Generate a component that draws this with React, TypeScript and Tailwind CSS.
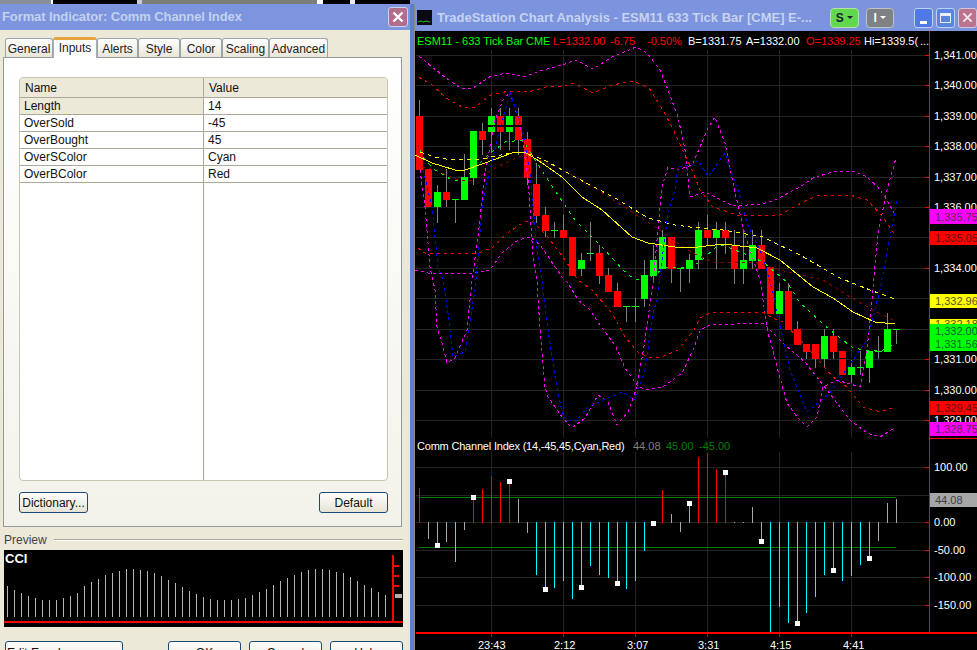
import React from "react";

type Pt = [number, number];

// candle: bar index, body top, body bottom, wick top, wick bottom, colour (g/r)
const candles: [number, number, number, number, number, string][] = [
  [0, 116, 170, 100, 170, "r"],
  [1, 169, 207, 169, 207, "r"],
  [2, 192, 207, 185, 223, "g"],
  [3, 192, 200, 169, 207, "r"],
  [4, 199, 199, 199, 223, "g"],
  [5, 177, 200, 154, 200, "g"],
  [6, 131, 178, 131, 185, "g"],
  [7, 131, 140, 123, 155, "r"],
  [8, 116, 132, 108, 153, "g"],
  [9, 116, 132, 108, 150, "r"],
  [10, 116, 132, 108, 150, "g"],
  [11, 116, 140, 108, 155, "r"],
  [12, 139, 178, 132, 185, "r"],
  [13, 184, 216, 163, 223, "r"],
  [14, 215, 231, 207, 237, "r"],
  [15, 230, 230, 222, 238, "g"],
  [16, 230, 238, 215, 238, "r"],
  [17, 237, 276, 237, 276, "r"],
  [18, 260, 269, 253, 276, "g"],
  [19, 253, 253, 222, 261, "g"],
  [20, 253, 276, 245, 284, "r"],
  [21, 275, 292, 268, 292, "r"],
  [22, 291, 307, 283, 307, "r"],
  [23, 306, 306, 306, 322, "g"],
  [24, 306, 306, 298, 322, "g"],
  [25, 275, 299, 260, 307, "g"],
  [26, 260, 276, 245, 283, "g"],
  [27, 237, 269, 230, 269, "g"],
  [28, 237, 269, 237, 283, "r"],
  [29, 268, 268, 268, 292, "g"],
  [30, 260, 269, 254, 283, "g"],
  [31, 230, 260, 222, 269, "g"],
  [32, 230, 238, 215, 245, "r"],
  [33, 230, 238, 222, 269, "g"],
  [34, 230, 238, 222, 254, "r"],
  [35, 245, 269, 230, 284, "r"],
  [36, 260, 269, 230, 284, "g"],
  [37, 245, 261, 230, 269, "g"],
  [38, 245, 269, 230, 269, "r"],
  [39, 267, 314, 267, 314, "r"],
  [40, 291, 314, 283, 314, "g"],
  [41, 291, 330, 283, 330, "r"],
  [42, 329, 345, 321, 345, "r"],
  [43, 344, 352, 344, 359, "r"],
  [44, 344, 359, 344, 368, "r"],
  [45, 336, 359, 329, 368, "g"],
  [46, 336, 352, 329, 359, "r"],
  [47, 351, 375, 351, 375, "r"],
  [48, 367, 375, 360, 383, "g"],
  [49, 367, 367, 351, 375, "g"],
  [50, 351, 368, 351, 383, "g"],
  [51, 351, 351, 336, 359, "g"],
  [52, 329, 352, 313, 352, "g"],
  [53, 329, 329, 329, 344, "g"],
];

// cci: bar index, end of the stem in screen y, colour
const cci: [number, number, string][] = [
  [0, 488, "r"], [1, 538, "a"], [2, 545, "a"], [3, 541, "a"], [4, 561, "c"], [5, 529, "a"],
  [6, 497, "r"], [7, 489, "r"], [8, 476, "r"], [9, 482, "r"], [10, 481, "r"], [11, 499, "a"],
  [12, 532, "a"], [13, 574, "c"], [14, 589, "c"], [15, 587, "c"], [16, 580, "c"], [17, 598, "c"],
  [18, 587, "c"], [19, 565, "c"], [20, 574, "c"], [21, 577, "c"], [22, 583, "c"], [23, 588, "c"],
  [24, 580, "c"], [25, 550, "c"], [26, 523, "a"], [27, 490, "r"], [28, 514, "a"], [29, 531, "a"],
  [30, 503, "a"], [31, 457, "r"], [32, 453, "r"], [33, 469, "r"], [34, 472, "r"], [35, 522, "a"],
  [36, 522, "a"], [37, 507, "a"], [38, 541, "a"], [39, 631, "c"], [40, 606, "c"], [41, 622, "c"],
  [42, 623, "c"], [43, 612, "c"], [44, 596, "c"], [45, 574, "c"], [46, 570, "c"], [47, 580, "c"],
  [48, 575, "c"], [49, 564, "c"], [50, 558, "c"], [51, 540, "a"], [52, 503, "a"], [53, 499, "a"],
];

const bands: { color: string; dash: string; pts: Pt[] }[] = [
  { color: "#ff00ff", dash: "3 3", pts: [[419, 56], [432, 67], [446, 78], [462, 89], [473, 88], [491, 76], [508, 73], [524, 77], [540, 71], [562, 65], [576, 60], [593, 69], [612, 57], [636, 47], [647, 53], [660, 70], [668, 90], [678, 117], [685, 150], [690, 197], [705, 192], [733, 206], [762, 204], [775, 200], [800, 187], [813, 178], [832, 172], [853, 171], [867, 177], [878, 187], [887, 200], [895, 215]] },
  { color: "#ff00ff", dash: "3 3", pts: [[415, 270], [428, 273], [472, 273], [490, 270], [502, 253], [518, 240], [530, 237], [540, 245], [562, 277], [568, 283], [578, 300], [590, 310], [602, 328], [615, 345], [625, 368], [637, 385], [645, 390], [663, 387], [682, 373], [694, 348], [700, 330], [710, 325], [763, 323], [770, 330], [785, 345], [805, 362], [827, 390], [837, 403], [850, 420], [867, 433], [880, 437], [893, 429]] },
  { color: "#ff00ff", dash: "3 3", pts: [[420, 170], [425, 207], [430, 267], [435, 290], [437, 327], [442, 343], [447, 363], [455, 358], [467, 330], [472, 280], [478, 237], [485, 173], [495, 120], [503, 100], [510, 92], [520, 125], [528, 177], [533, 257], [537, 280], [540, 330], [545, 387], [548, 397], [562, 417], [572, 428], [585, 418], [598, 395], [608, 402], [617, 425], [628, 412], [637, 387], [645, 340], [653, 283], [662, 187], [668, 167], [677, 170], [692, 165], [700, 147], [707, 130], [715, 117], [725, 143], [735, 193], [745, 235], [760, 280], [768, 333], [772, 347], [777, 367], [787, 403], [797, 417], [807, 427], [817, 417], [823, 387], [837, 380], [860, 387], [867, 350], [872, 300], [878, 233], [887, 190], [896, 158]] },
  { color: "#ff0000", dash: "3 4", pts: [[419, 77], [432, 85], [446, 98], [464, 108], [475, 107], [491, 95], [509, 91], [529, 92], [549, 86], [564, 86], [573, 83], [593, 93], [612, 85], [634, 81], [649, 88], [663, 110], [672, 127], [692, 170], [700, 190], [713, 207], [737, 215], [780, 215], [803, 202], [817, 196], [850, 195], [867, 200], [883, 217], [895, 235]] },
  { color: "#ff0000", dash: "3 4", pts: [[418, 248], [425, 253], [448, 253], [475, 254], [492, 248], [505, 235], [525, 221], [533, 222], [548, 237], [565, 260], [578, 280], [592, 290], [612, 313], [625, 337], [638, 352], [648, 357], [662, 357], [678, 350], [694, 330], [700, 318], [710, 313], [763, 312], [772, 318], [783, 322], [805, 345], [833, 377], [847, 387], [863, 407], [880, 412], [895, 407]] },
  { color: "#8b0000", dash: "3 4", pts: [[422, 167], [435, 170], [458, 180], [473, 180], [495, 168], [523, 155], [558, 167], [598, 190], [632, 212], [667, 235], [680, 245], [697, 255], [713, 262], [757, 263], [780, 270], [823, 280], [850, 297], [873, 310], [893, 320]] },
  { color: "#00ff00", dash: "3 5", pts: [[420, 150], [425, 160], [435, 170], [452, 180], [463, 180], [488, 155], [505, 142], [523, 140], [535, 160], [558, 195], [575, 220], [602, 247], [623, 270], [635, 280], [650, 277], [667, 267], [687, 268], [700, 262], [715, 248], [723, 245], [740, 252], [763, 262], [787, 282], [800, 303], [830, 330], [853, 348], [870, 351], [883, 350], [897, 342]] },
  { color: "#ffff00", dash: "", pts: [[415, 155], [432, 163], [455, 170], [465, 170], [485, 163], [512, 153], [525, 152], [542, 163], [562, 177], [582, 197], [602, 210], [632, 237], [648, 243], [675, 247], [690, 248], [723, 244], [757, 248], [780, 260], [813, 287], [833, 298], [853, 312], [875, 322], [895, 324]] },
  { color: "#ffff00", dash: "4 4", pts: [[420, 152], [435, 157], [452, 160], [482, 159], [515, 152], [525, 152], [548, 162], [575, 177], [615, 198], [648, 218], [675, 225], [690, 227], [723, 230], [763, 237], [800, 255], [840, 278], [870, 290], [895, 299]] },
  { color: "#0000ff", dash: "3 3", pts: [[423, 170], [432, 207], [438, 267], [443, 280], [448, 313], [453, 357], [465, 352], [475, 290], [483, 200], [497, 140], [510, 92], [518, 117], [525, 140], [530, 173], [537, 250], [542, 280], [547, 323], [555, 377], [563, 417], [575, 422], [588, 407], [603, 400], [622, 392], [635, 400], [645, 370], [653, 313], [657, 300], [668, 213], [675, 190], [678, 167], [692, 165], [698, 160], [708, 177], [725, 153], [728, 163], [738, 190], [747, 223], [763, 257], [773, 293], [790, 370], [807, 412], [830, 393], [867, 340], [880, 290], [897, 200]] },
];

const priceTicks: [string, number][] = [
  ["1,341.00", 55], ["1,340.00", 85], ["1,339.00", 116], ["1,338.00", 146], ["1,337.00", 177],
  ["1,336.00", 207], ["1,334.00", 268], ["1,331.00", 359], ["1,330.00", 390], ["1,329.00", 420],
];

const priceFlags: { label: string; y: number; h: number; bg: string; fg: string; ty: number }[] = [
  { label: "1,335.75", y: 209, h: 15, bg: "#ff00ff", fg: "#5a2a5a", ty: 217 },
  { label: "1,335.05", y: 231, h: 14, bg: "#ff0000", fg: "#5a1414", ty: 238 },
  { label: "1,332.96", y: 294, h: 14, bg: "#ffff00", fg: "#555522", ty: 301 },
  { label: "1,332.18", y: 319, h: 6, bg: "#ffff00", fg: "#555522", ty: 324 },
  { label: "1,332.00", y: 324, h: 14, bg: "#00ff00", fg: "#063", ty: 331 },
  { label: "1,331.56", y: 338, h: 13, bg: "#00ff00", fg: "#063", ty: 344 },
  { label: "1,329.45", y: 401, h: 14, bg: "#ff0000", fg: "#5a1414", ty: 408 },
  { label: "1,328.75", y: 422, h: 14, bg: "#ff00ff", fg: "#5a2a5a", ty: 429 },
];

const subTicks: [string, number][] = [
  ["100.00", 467], ["0.00", 522], ["-50.00", 550], ["-100.00", 577], ["-150.00", 605],
];

const headerBits: [string, number, string][] = [
  ["ESM11 - 633 Tick Bar", 417, "#00ff00"], ["CME", 526, "#00ff00"], ["L=1332.00", 553, "#ff0000"],
  ["-6.75", 610, "#ff0000"], ["-0.50%", 647, "#ff0000"], ["B=1331.75", 688, "#ffffff"],
  ["A=1332.00", 746, "#ffffff"], ["O=1339.25", 806, "#ff0000"], ["Hi=1339.5(", 864, "#ffffff"], ["...", 920, "#ffffff"],
];

const timeLabels: [string, number, number][] = [
  ["23:43", 478, 491], ["2:12", 554, 563], ["3:07", 627, 635], ["3:31", 698, 707], ["4:15", 770, 779], ["4:41", 843, 851],
];

const previewTops = [348, 360, 369, 378, 384, 390, 390, 390, 384, 378, 369, 348, 336, 327, 315, 309, 303, 297, 297, 300, 303, 309, 318, 330, 339, 351, 363, 372, 381, 387, 390, 390, 390, 387, 384, 375, 366, 357, 345, 333, 324, 315, 306, 300, 297, 297, 300, 306, 309, 321, 333, 345, 354, 366, 375];

const tabs = [
  { label: "General", w: "w-[48px]" },
  { label: "Inputs", w: "w-[44px]", active: true },
  { label: "Alerts", w: "w-[41px]" },
  { label: "Style", w: "w-[42px]" },
  { label: "Color", w: "w-[42px]" },
  { label: "Scaling", w: "w-[47px]" },
  { label: "Advanced", w: "w-[59px]" },
];

const inputs = [
  ["Length", "14"],
  ["OverSold", "-45"],
  ["OverBought", "45"],
  ["OverSColor", "Cyan"],
  ["OverBColor", "Red"],
];

const barX = (i: number) => 419.5 + 9 * i;
const toPoints = (pts: Pt[]) => pts.map((p) => p.join(",")).join(" ");

function XpButton({ label, className }: { label: string; className: string }) {
  return (
    <div
      className={
        "flex items-center justify-center shrink-0 rounded-[3px] border border-[#1c4a78] bg-gradient-to-b from-white to-[#e6e3d4] text-[12px] text-[#111] " +
        className
      }
    >
      {label}
    </div>
  );
}

function FormatDialog() {
  return (
    <div className="w-[410px] h-full shrink-0 flex flex-col bg-[#ece9d8]">
      <div className="h-[26px] shrink-0 flex items-center justify-between pl-[2px] pr-[2px] bg-[#7c95de]">
        <span className="text-[13px] font-bold text-[#c3d1f1] tracking-[-0.1px]">Format Indicator: Comm Channel Index</span>
        <div className="w-[20px] h-[20px] rounded-[3px] border border-[#c9d4ee] bg-[#b26c8c] flex items-center justify-center">
          <svg width="12" height="12" viewBox="0 0 12 12">
            <path d="M1.5 1.5 L10.5 10.5 M10.5 1.5 L1.5 10.5" stroke="#ffffff" strokeWidth="2.4" />
          </svg>
        </div>
      </div>

      <div className="h-[21px] mt-[6px] shrink-0 flex items-end pl-[5px]">
        {tabs.map((t) =>
          t.active ? (
            <div
              key={t.label}
              className={
                t.w +
                " h-[21px] -mb-px z-10 flex items-start justify-center pt-[1px] rounded-t-[3px] border-t-[3px] border-x border-t-[#e8a33c] border-x-[#aab] bg-white text-[12px] text-[#222] leading-[14px]"
              }
            >
              {t.label}
            </div>
          ) : (
            <div
              key={t.label}
              className={
                t.w +
                " h-[19px] flex items-center justify-center pt-[1px] rounded-t-[3px] border border-b-0 border-[#9aa5a8] bg-gradient-to-b from-white to-[#e9e6d8] text-[12px] text-[#222]"
              }
            >
              {t.label}
            </div>
          ),
        )}
      </div>

      <div className="ml-[3px] w-[399px] h-[470px] shrink-0 border border-[#919b9c] bg-gradient-to-b from-white to-[#f3f2ea] px-[15px] pt-[19px]">
        <div className="w-[369px] h-[404px] flex flex-col rounded-[4px] border border-[#c8c5b2] bg-white text-[12px] text-[#111] overflow-hidden">
          <div className="h-[20px] shrink-0 grid grid-cols-[184px_1fr] bg-[#ece9d8] border-b border-[#aca899]">
            <div className="pl-[5px] pt-[1px] leading-[19px] border-r border-[#aca899]">Name</div>
            <div className="pl-[5px] pt-[1px] leading-[19px]">Value</div>
          </div>
          {inputs.map(([name, value], i) => (
            <div key={name} className="h-[17px] shrink-0 grid grid-cols-[184px_1fr] border-b border-[#aca899]">
              <div className={"pl-[4px] leading-[16px] border-r border-[#aca899] " + (i === 0 ? "bg-[#ece9d8]" : "")}>{name}</div>
              <div className="pl-[4px] leading-[16px]">{value}</div>
            </div>
          ))}
          <div className="flex-1 grid grid-cols-[184px_1fr]">
            <div className="border-r border-[#aca899]" />
            <div />
          </div>
        </div>
        <div className="mt-[11px] w-[369px] flex justify-between">
          <XpButton label="Dictionary..." className="w-[69px] h-[21px]" />
          <XpButton label="Default" className="w-[69px] h-[21px]" />
        </div>
      </div>

      <div className="h-[23px] shrink-0 flex items-center pt-[2px] pl-[4px] pr-[7px] gap-[7px]">
        <span className="text-[12px] text-[#444]">Preview</span>
        <div className="flex-1 h-[2px] border-t border-[#aca899] bg-white" />
      </div>

      <div className="ml-[4px] w-[399px] h-[77px] shrink-0 bg-black">
        <svg width="399" height="77" viewBox="4 550 399 77" className="block">
          {previewTops.map((z, i) => (
            <rect key={i} x={7 + 7 * i} y={Math.round(470 + z / 3)} width="1" height={617 - Math.round(470 + z / 3)} fill="#b5b5b5" />
          ))}
          <text x="5" y="563" fill="#ffffff" fontSize="13" fontWeight="700" fontFamily="'Liberation Sans',Arial,sans-serif">CCI</text>
          <rect x="4" y="621" width="399" height="2" fill="#ff0000" />
          <rect x="392" y="555" width="2" height="67" fill="#ff0000" />
          <rect x="393" y="565" width="6" height="2" fill="#ff0000" />
          <rect x="393" y="575" width="6" height="2" fill="#ff0000" />
          <rect x="393" y="585" width="6" height="2" fill="#ff0000" />
          <rect x="395" y="594" width="7" height="4" fill="#b0b0b0" />
        </svg>
      </div>

      <div className="mt-[14px] h-[24px] shrink-0 flex pl-[5px]">
        <XpButton label="Edit EasyLanguage..." className="w-[118px] h-[24px]" />
        <XpButton label="OK" className="ml-[45px] w-[73px] h-[24px]" />
        <XpButton label="Cancel" className="ml-[8px] w-[73px] h-[24px]" />
        <XpButton label="Help" className="ml-[8px] w-[73px] h-[24px]" />
      </div>
    </div>
  );
}

function ChartTitleBar() {
  return (
    <div className="h-[27px] shrink-0 flex items-center pl-[2px] bg-[#7c94dd]">
      <svg width="15" height="15" viewBox="0 0 15 15" className="shrink-0">
        <rect width="15" height="15" fill="#0a0a14" />
        <path d="M1 12 L4 11 L6 12 L9 11 L13 12" stroke="#20c020" strokeWidth="1" fill="none" />
      </svg>
      <span className="ml-[5px] w-[393px] shrink-0 text-[13px] font-bold text-[#c6d3f1] whitespace-nowrap overflow-hidden">
        TradeStation Chart Analysis - ESM11 633 Tick Bar [CME] E-...
      </span>
      <div className="w-[29px] h-[20px] rounded-[4px] border border-[#b8e0a8] bg-[#62d84e] flex items-center justify-center gap-[3px] text-[12px] font-bold text-[#123]">
        S<span className="w-0 h-0 border-x-[3px] border-x-transparent border-t-[3px] border-t-[#123]" />
      </div>
      <div className="ml-[7px] w-[28px] h-[20px] rounded-[4px] border border-[#c0c4c8] bg-[#7e8284] flex items-center justify-center gap-[3px] text-[12px] font-bold text-white">
        I<span className="w-0 h-0 border-x-[3px] border-x-transparent border-t-[3px] border-t-white" />
      </div>
      <div className="ml-[20px] w-[20px] h-[20px] rounded-[3px] border border-[#c0d0f0] bg-[#4f79e4] flex items-end justify-center pb-[3px]">
        <div className="w-[7px] h-[3px] bg-white" />
      </div>
      <div className="ml-[3px] w-[19px] h-[20px] rounded-[3px] border border-[#c0d0f0] bg-[#5a84e2] flex items-center justify-center">
        <div className="w-[11px] h-[10px] border border-t-[3px] border-[#e6edfb]" />
      </div>
      <div className="ml-[3px] w-[19px] h-[20px] rounded-[3px] border border-[#d0c8e0] bg-[#bb7390] flex items-center justify-center">
        <svg width="11" height="11" viewBox="0 0 12 12">
          <path d="M1.5 1.5 L10.5 10.5 M10.5 1.5 L1.5 10.5" stroke="#f3e4ea" strokeWidth="2.2" />
        </svg>
      </div>
    </div>
  );
}

function ChartPlot() {
  const labelFont = "'Liberation Sans',Arial,sans-serif";
  const gridX = [491, 563, 635, 707, 779, 851];
  const gridY = [55, 85, 116, 146, 177, 207, 237, 268, 298, 329, 359, 390, 420];
  const subGridY = [467, 495, 522, 550, 577, 605];
  return (
    <svg width="562" height="619" viewBox="415 31 562 619" className="block bg-black" fontFamily={labelFont} fontSize="11">
      {gridX.map((x) => (
        <g key={x}>
          <rect x={x} y="50" width="1" height="388" fill="#242424" />
          <rect x={x} y="452" width="1" height="181" fill="#242424" />
          <rect x={x} y="633" width="1" height="4" fill="#ff0000" />
        </g>
      ))}
      {gridY.map((y) => (
        <rect key={y} x="416" y={y} width="513" height="1" fill="#242424" />
      ))}
      {subGridY.map((y) => (
        <rect key={y} x="416" y={y} width="513" height="1" fill="#242424" />
      ))}

      {candles.map(([i, top, bottom, wt, wb, c]) => {
        const fill = c === "g" ? "#00ff00" : "#ff0000";
        const x = barX(i);
        return (
          <g key={i}>
            <rect x={x - 0.5} y={wt} width="1" height={wb - wt} fill="#808080" />
            {top === bottom ? (
              <rect x={x - 3.5} y={top} width="7" height="1" fill={fill} />
            ) : (
              <rect x={x - 3.5} y={top} width="7" height={bottom - top} fill={fill} />
            )}
          </g>
        );
      })}
      <rect x="486" y="125" width="37" height="2" fill="#000000" />
      <rect x="836" y="358" width="18" height="1" fill="#000000" />

      {bands.map((b, i) => (
        <polyline key={i} points={toPoints(b.pts)} fill="none" stroke={b.color} strokeWidth="1" strokeDasharray={b.dash || undefined} shapeRendering="crispEdges" />
      ))}

      {headerBits.map(([t, x, c]) => (
        <text key={x} x={x} y="45" fill={c}>{t}</text>
      ))}

      {/* cci pane */}
      <text x="417" y="450" fill="#ffffff" letterSpacing="-0.2">Comm Channel Index (14,-45,45,Cyan,Red)</text>
      <text x="633" y="450" fill="#808080">44.08</text>
      <text x="666" y="450" fill="#008000">45.00</text>
      <text x="699" y="450" fill="#008000">-45.00</text>
      <rect x="419" y="497" width="477" height="1" fill="#008000" />
      <rect x="419" y="547" width="477" height="1" fill="#008000" />
      {cci.map(([i, end, c]) => {
        const fill = c === "r" ? "#ff0000" : c === "c" ? "#00ffff" : "#a8a8a8";
        const x = barX(i);
        const top = Math.min(end, 522);
        const h = Math.abs(end - 522) + 1;
        return <rect key={i} x={x - 0.5} y={top} width="1" height={h} fill={fill} />;
      })}
      {cci.filter(([i]) => i % 4 === 2).map(([i, end]) => (
        <rect key={i} x={barX(i) - 2.5} y={end - 2} width="5" height="5" fill="#ffffff" />
      ))}

      {/* axis */}
      <rect x="416" y="632" width="561" height="2" fill="#ff0000" />
      <rect x="929" y="31" width="1" height="601" fill="#ff0000" />
      <rect x="929" y="438" width="48" height="1" fill="#ff0000" />
      {priceTicks.map(([t, y]) => (
        <g key={t}>
          <rect x="925" y={y} width="4" height="1" fill="#ff0000" />
          <text x="934" y={y + 4} fill="#ffffff">{t}</text>
        </g>
      ))}
      {priceFlags.map((f) => (
        <g key={f.label}>
          <rect x="930" y={f.y} width="47" height={f.h} fill={f.bg} />
          <text x="935" y={f.ty + 4} fill={f.fg}>{f.label}</text>
        </g>
      ))}
      {subTicks.map(([t, y]) => (
        <g key={t}>
          <rect x="925" y={y} width="4" height="1" fill="#ff0000" />
          <text x="934" y={y + 4} fill="#ffffff">{t}</text>
        </g>
      ))}
      <rect x="930" y="493" width="47" height="14" fill="#a6a6a6" />
      <text x="935" y="504" fill="#404040">44.08</text>
      {timeLabels.map(([t, x]) => (
        <text key={t} x={x} y="649" fill="#ffffff">{t}</text>
      ))}
    </svg>
  );
}

export default function App() {
  return (
    <div className="w-[977px] h-[650px] overflow-hidden flex flex-col bg-black font-['Liberation_Sans',Arial,sans-serif]">
      <div className="h-[4px] shrink-0 flex bg-black">
        <div className="w-[51px] bg-[#8a8f9c]" />
        <div className="w-[2px] bg-white" />
        <div className="w-[84px]" />
        <div className="w-[5px] bg-[#c8c8d8]" />
        <div className="w-[175px] bg-[#7a7f7a]" />
        <div className="w-[6px] bg-white" />
        <div className="w-[27px]" />
        <div className="w-[5px] bg-[#e8e8f0]" />
        <div className="w-[55px]" />
        <div className="flex-1 bg-[#7c94dd]" />
      </div>
      <div className="flex-1 min-h-0 flex">
        <FormatDialog />
        <div className="w-[4px] shrink-0 bg-[#5f7ed0]" />
        <div className="flex-1 min-w-0 flex flex-col border-l border-[#8a8a80]">
          <ChartTitleBar />
          <ChartPlot />
        </div>
      </div>
    </div>
  );
}
